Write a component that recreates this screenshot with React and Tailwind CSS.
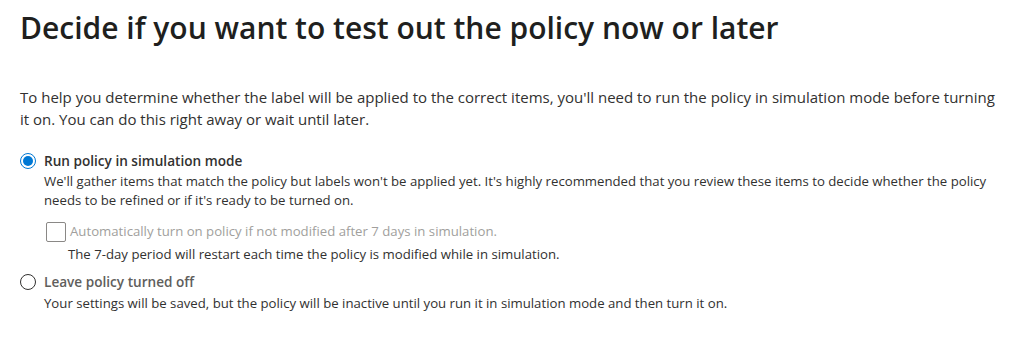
import React from "react";

export default function App() {
  return (
    <div className="w-[1024px] h-[337px] bg-white px-[20px] pt-[8px] text-[#323130]" style={{ fontFamily: '"Open Sans", "Noto Sans", sans-serif' }}>
      <h1 className="text-[30px] leading-[40px] font-semibold text-[#201f1e]">
        Decide if you want to test out the policy now or later
      </h1>
      <p className="mt-[38px] text-[15px] leading-[22px]">
        To help you determine whether the label will be applied to the correct items, you'll need to run the policy in simulation mode before turning<br />
        it on. You can do this right away or wait until later.
      </p>
      <div className="mt-[21px] flex flex-col">
        <div className="flex items-center gap-[8px] h-[20px]">
          <span className="w-[16px] h-[16px] rounded-full border border-[#0078d4] flex items-center justify-center">
            <span className="w-[10px] h-[10px] rounded-full bg-[#0078d4]" />
          </span>
          <span className="text-[13.6px] font-semibold">Run policy in simulation mode</span>
        </div>
        <div className="pl-[24px] text-[13.2px] leading-[19px] mt-[1px]">
          We'll gather items that match the policy but labels won't be applied yet. It's highly recommended that you review these items to decide whether the policy<br />
          needs to be refined or if it's ready to be turned on.
        </div>
        <div className="pl-[26px] mt-[12px] flex items-center gap-[4px]">
          <span className="w-[20px] h-[20px] rounded-[2px] border border-[#8a8886] bg-white" />
          <span className="text-[13.2px] text-[#a19f9d]">Automatically turn on policy if not modified after 7 days in simulation.</span>
        </div>
        <div className="pl-[48px] text-[13.2px] leading-[20px] mt-[2px]">
          The 7-day period will restart each time the policy is modified while in simulation.
        </div>
        <div className="flex items-center gap-[8px] h-[20px] mt-[8px]">
          <span className="w-[16px] h-[16px] rounded-full border border-[#323130]" />
          <span className="text-[13.6px] font-semibold text-[#605e5c]">Leave policy turned off</span>
        </div>
        <div className="pl-[24px] text-[13.2px] leading-[20px] mt-[1px]">
          Your settings will be saved, but the policy will be inactive until you run it in simulation mode and then turn it on.
        </div>
      </div>
    </div>
  );
}
